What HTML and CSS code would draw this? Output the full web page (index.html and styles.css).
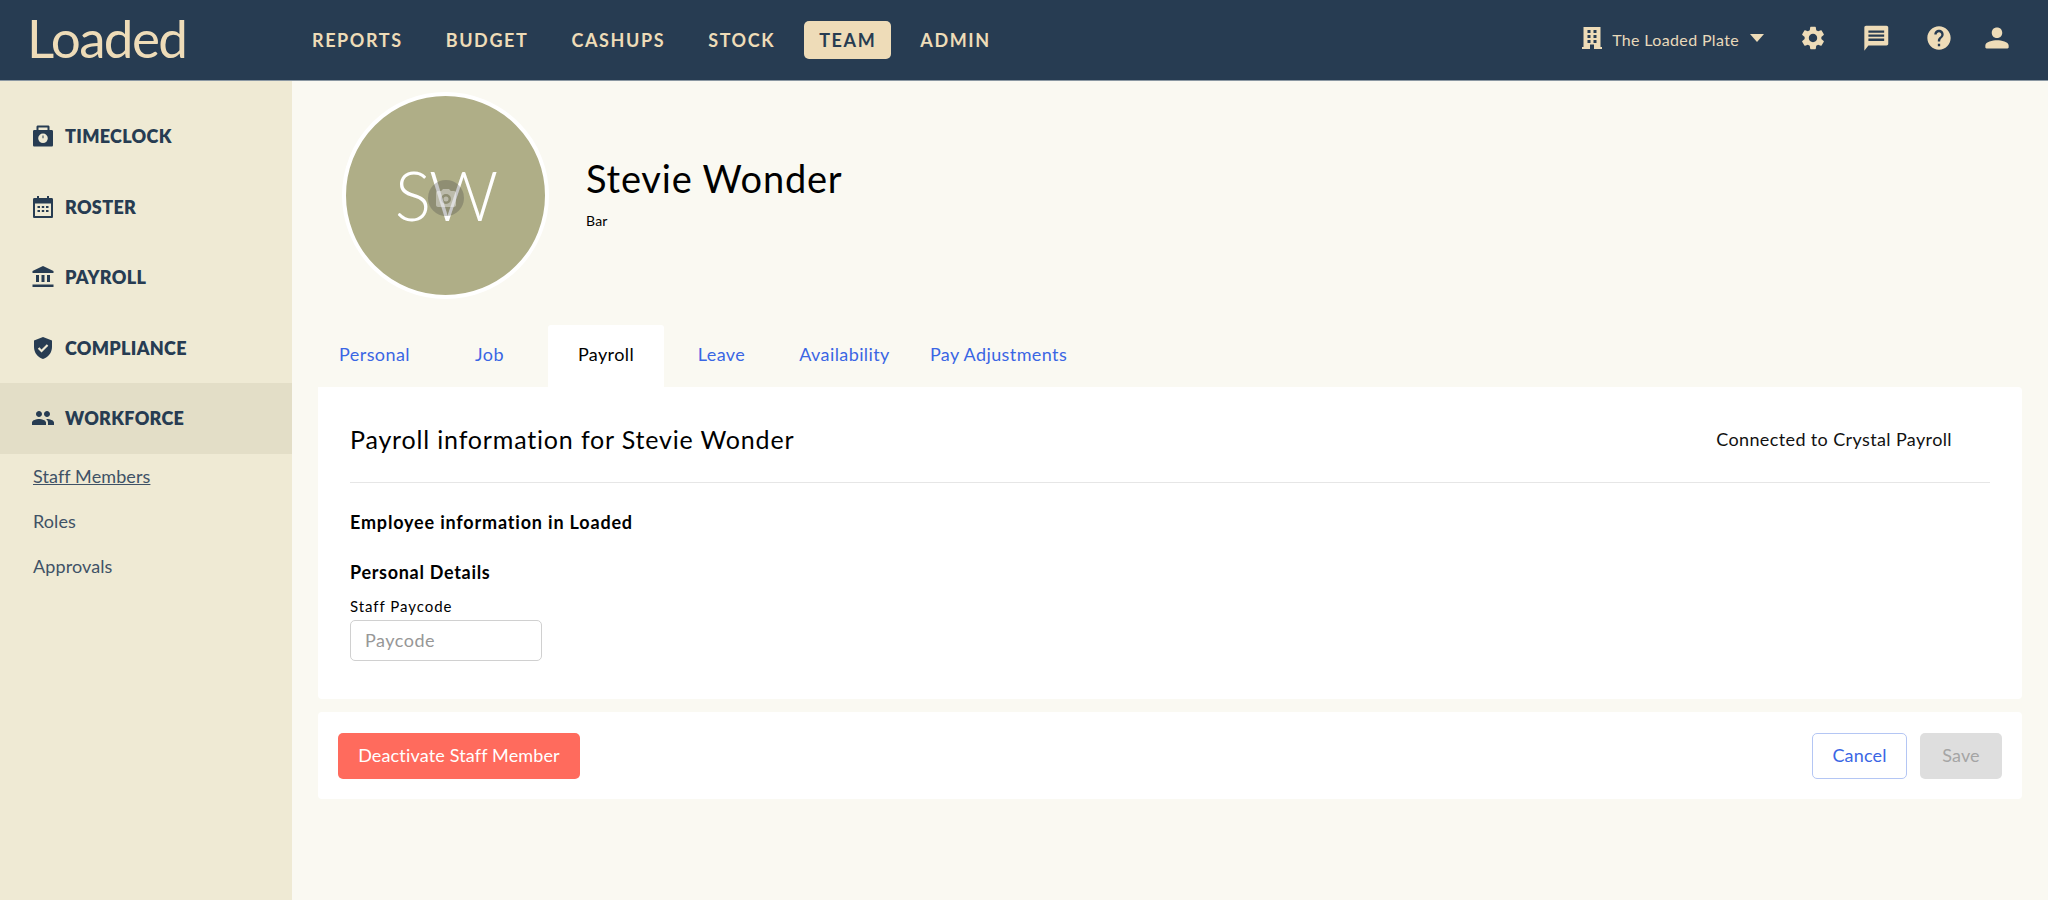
FILE: index.html
```html
<!DOCTYPE html>
<html lang="en">
<head>
<meta charset="utf-8">
<title>Loaded</title>
<link rel="stylesheet" href="styles.css">
</head>
<body>
<header class="topbar">
  <div class="logo">Loaded</div>
  <nav class="mainnav">
    <a class="navlink">REPORTS</a>
    <a class="navlink">BUDGET</a>
    <a class="navlink">CASHUPS</a>
    <a class="navlink">STOCK</a>
    <a class="navlink navlink-active">TEAM</a>
    <a class="navlink">ADMIN</a>
  </nav>
  <div class="topright">
    <div class="venue">
      <svg class="venue-icon" viewBox="0 0 20 22"><path fill-rule="evenodd" d="M1.500 0H18.500V20H20V22H0V20H1.500ZM5.500 3V6H8.500V3ZM11.500 3V6H14.500V3ZM5.500 8V11H8.500V8ZM11.500 8V11H14.500V8ZM5.500 13V16H8.500V13ZM11.500 13V16H14.500V13ZM8 17.500V22H12V17.500Z"/></svg>
      <span class="venue-name">The Loaded Plate</span>
      <span class="caret"></span>
    </div>
    <svg class="topicon" viewBox="0 0 24 24"><path d="M19.140 12.940c.04-.3.06-.61.06-.94 0-.32-.02-.64-.07-.94l2.030-1.580c.18-.14.23-.41.12-.61l-1.920-3.320c-.12-.22-.37-.29-.59-.22l-2.390.96c-.5-.38-1.030-.7-1.620-.94l-.36-2.540c-.04-.24-.24-.41-.48-.41h-3.840c-.24 0-.43.17-.47.41l-.36 2.540c-.59.24-1.130.57-1.620.94l-2.390-.96c-.22-.08-.47 0-.59.22L2.740 8.870c-.12.21-.08.47.12.61l2.030 1.580c-.05.3-.09.63-.09.94s.02.64.07.94l-2.030 1.580c-.18.14-.23.41-.12.61l1.920 3.320c.12.22.37.29.59.22l2.390-.96c.5.38 1.030.7 1.620.94l.36 2.540c.05.24.24.41.48.41h3.840c.24 0 .44-.17.47-.41l.36-2.540c.59-.24 1.130-.56 1.620-.94l2.390.96c.22.08.47 0 .59-.22l1.920-3.320c.12-.22.07-.47-.12-.61l-2.010-1.580zM12 15.600c-1.980 0-3.600-1.620-3.600-3.600s1.620-3.600 3.600-3.600 3.600 1.620 3.600 3.600-1.620 3.600-3.600 3.600z"/></svg>
    <svg class="topicon" viewBox="0 0 24 24"><path fill-rule="evenodd" d="M3.500 1.500H21c.9 0 1.500.6 1.500 1.500V17c0 .9-.6 1.500-1.500 1.500H5.500L2 23V3c0-.9.6-1.500 1.500-1.500ZM5.500 5.500V7.500H19V5.500ZM5.500 9V11H19V9ZM5.500 12.500V14.500H19V12.500Z"/></svg>
    <svg class="topicon" viewBox="0 0 24 24"><path d="M12 2C6.480 2 2 6.480 2 12s4.480 10 10 10 10-4.480 10-10S17.520 2 12 2zm1 17h-2v-2h2v2zm2.070-7.750l-.9.92C13.450 12.900 13 13.500 13 15h-2v-.5c0-1.100.45-2.100 1.170-2.830l1.240-1.260c.37-.36.59-.86.59-1.410 0-1.100-.9-2-2-2s-2 .9-2 2H8c0-2.210 1.790-4 4-4s4 1.790 4 4c0 .88-.36 1.680-.93 2.250z"/></svg>
    <svg class="topicon topicon-user" viewBox="0 0 24 24"><path d="M12 12c2.760 0 4.500-1.900 4.500-4.500S14.760 3 12 3 7.500 4.900 7.500 7.500 9.240 12 12 12zm0 2c-3.670 0-10 1.340-10 4.500V20c0 .6.400 1 1 1h18c.6 0 1-.4 1-1v-1.500c0-3.160-6.330-4.500-10-4.500z"/></svg>
  </div>
</header>

<div class="layout">
  <aside class="sidebar">
    <a class="sideitem">
      <svg class="sideicon" viewBox="0 0 24 24"><path fill-rule="evenodd" d="M7 1.500H17C18 1.500 18.500 2 18.500 3V6H20.500C21.500 6 22 6.500 22 7.500V21C22 22 21.500 22.500 20.500 22.500H3.500C2.500 22.500 2 22 2 21V7.500C2 6.500 2.500 6 3.500 6H5.500V3C5.500 2 6 1.500 7 1.500ZM7.500 3.500V6H16.500V3.500ZM12 9.500A4.800 4.800 0 1 0 12 19.100 4.800 4.800 0 1 0 12 9.500ZM11.500 11.500H12.500V14.300H11.500Z"/></svg>
      <span>TIMECLOCK</span>
    </a>
    <a class="sideitem">
      <svg class="sideicon" viewBox="0 0 24 24"><path fill-rule="evenodd" d="M6 1H8V3H16V1H18V3H20.500C21.500 3 22 3.500 22 4.500V21.500C22 22.500 21.500 23 20.500 23H3.500C2.500 23 2 22.500 2 21.500V4.500C2 3.500 2.500 3 3.500 3H6ZM4 8.500V21H20V8.500ZM6.500 11H9V13H6.500ZM10.800 11H13.200V13H10.800ZM15 11H17.500V13H15ZM6.500 15H9V17H6.500ZM10.800 15H13.200V17H10.800ZM15 15H17.500V17H15Z"/></svg>
      <span>ROSTER</span>
    </a>
    <a class="sideitem">
      <svg class="sideicon" viewBox="0 0 24 24"><path d="M5 10v7h3v-7H5zm5.500 0v7h3v-7h-3zM1.500 22h21v-2.500h-21V22zM16 10v7h3v-7h-3zM12 1 1.500 6v2h21V6L12 1z"/></svg>
      <span>PAYROLL</span>
    </a>
    <a class="sideitem">
      <svg class="sideicon" viewBox="0 0 24 24"><path fill-rule="evenodd" d="M12 1 3 4.500V11c0 5.550 3.840 10.740 9 12 5.160-1.260 9-6.450 9-12V4.500L12 1zM10.500 16.500 6.800 12.800 8.400 11.300 10.500 13.400 15.800 8.200 17.300 9.700Z"/></svg>
      <span>COMPLIANCE</span>
    </a>
    <a class="sideitem sideitem-active">
      <svg class="sideicon" viewBox="0 0 24 24"><path d="M16 11c1.660 0 2.990-1.340 2.990-3S17.660 5 16 5c-1.660 0-3 1.340-3 3s1.340 3 3 3zm-8 0c1.660 0 2.990-1.340 2.990-3S9.660 5 8 5C6.340 5 5 6.340 5 8s1.340 3 3 3zm0 2c-2.330 0-7 1.170-7 3.500V19h14v-2.500c0-2.330-4.670-3.500-7-3.500zm8 0c-.29 0-.62.02-.97.05 1.160.84 1.970 1.970 1.970 3.450V19h6v-2.500c0-2.330-4.670-3.500-7-3.500z"/></svg>
      <span>WORKFORCE</span>
    </a>
    <div class="submenu">
      <a class="subitem subitem-current">Staff Members</a>
      <a class="subitem">Roles</a>
      <a class="subitem">Approvals</a>
    </div>
  </aside>

  <main class="content">
    <section class="profile">
      <div class="avatar">
        <span class="initials">SW</span>
        <span class="camera">
          <svg viewBox="0 0 24 24"><path fill-rule="evenodd" d="M9 3 7.200 5H4C2.900 5 2 5.900 2 7V19C2 20.100 2.900 21 4 21H20C21.100 21 22 20.100 22 19V7C22 5.900 21.100 5 20 5H16.800L15 3ZM12 8A5 5 0 1 0 12 18 5 5 0 1 0 12 8ZM12 10.500A2.500 2.500 0 1 1 12 15.500 2.500 2.500 0 1 1 12 10.500Z"/></svg>
        </span>
      </div>
      <div class="identity">
        <h1 class="person-name">Stevie Wonder</h1>
        <div class="person-role">Bar</div>
      </div>
    </section>

    <nav class="tabs">
      <a class="tab tab-personal">Personal</a>
      <a class="tab tab-job">Job</a>
      <a class="tab tab-active">Payroll</a>
      <a class="tab tab-leave">Leave</a>
      <a class="tab tab-avail">Availability</a>
      <a class="tab tab-adjust">Pay Adjustments</a>
    </nav>

    <section class="card card-main">
      <div class="card-head">
        <h2 class="card-title">Payroll information for Stevie Wonder</h2>
        <div class="connected">Connected to Crystal Payroll</div>
      </div>
      <h3 class="section-title">Employee information in Loaded</h3>
      <h3 class="section-sub">Personal Details</h3>
      <label class="field-label" for="paycode">Staff Paycode</label>
      <input class="field-input" id="paycode" type="text" placeholder="Paycode">
    </section>

    <section class="card card-actions">
      <button class="btn btn-danger" type="button">Deactivate Staff Member</button>
      <div class="actions-right">
        <button class="btn btn-outline" type="button">Cancel</button>
        <button class="btn btn-disabled" type="button">Save</button>
      </div>
    </section>
  </main>
</div>
</body>
</html>
```

FILE: styles.css
```css
* { box-sizing: border-box; }
html, body { margin: 0; padding: 0; height: 100%; overflow: hidden; }
body {
  background: #faf9f2;
  font-family: "Lato", "Noto Sans", sans-serif;
  color: #000;
  width: 2048px;
  height: 900px;
}
h1, h2, h3 { margin: 0; font-weight: normal; }

.topbar {
  height: 81px;
  background: #273c52;
  border-bottom: 1px solid #8b98a3;
  display: flex;
  align-items: flex-start;
  color: #eedcb8;
}
.logo {
  width: 298px;
  padding: 9px 0 0 27px;
  font-size: 53px;
  line-height: 58px;
  font-weight: 400;
  letter-spacing: -1.600px;
  color: #eedcb8;
}
.mainnav {
  display: flex;
  align-items: center;
  height: 38px;
  margin-top: 21px;
  gap: 15px;
}
.navlink {
  padding: 0 14px;
  height: 38px;
  line-height: 38px;
  font-size: 18px;
  font-weight: 700;
  letter-spacing: 1.600px;
  color: #eedcb8;
  border-radius: 5px;
}
.navlink-active { background: #eedcb8; color: #273c52; padding: 0 15px; }
.topright {
  margin-left: auto;
  display: flex;
  align-items: center;
  height: 38px;
  margin-top: 20px;
  padding-right: 37px;
  gap: 35px;
}
.venue { display: flex; align-items: center; }
.venue-icon { width: 20px; height: 22px; fill: #eedcb8; margin-right: 10px; margin-top: -2px; }
.venue-name { font-size: 16px; letter-spacing: .35px; color: #e8d9bb; font-weight: 400; }
.caret {
  margin-left: 11px;
  margin-top: -3px;
  border-left: 7px solid transparent;
  border-right: 7px solid transparent;
  border-top: 8px solid #eedcb8;
}
.topicon { width: 28px; height: 28px; fill: #eedcb8; margin-top: -2px; }
.topicon-user { margin-left: -5px; }

.layout { display: flex; height: 819px; }

.sidebar { width: 292px; flex: none; background: #efead4; padding-top: 20px; }
.sideitem {
  height: 70.500px;
  display: flex;
  align-items: center;
  padding-left: 31px;
  color: #273c52;
  font-weight: 800;
  font-size: 18px;
  letter-spacing: .3px;
}
.sideitem-active { background: #e3dec7; }
.sideicon { width: 24px; height: 24px; fill: #273c52; margin-right: 10px; flex: none; }
.subitem {
  display: block;
  height: 45px;
  line-height: 44px;
  padding-left: 33px;
  color: #3f5266;
  font-size: 18px;
  letter-spacing: .1px;
  font-weight: 400;
}
.subitem-current { text-decoration: underline; }

.content { flex: 1; padding: 0 26px; min-width: 0; }

.profile { display: flex; height: 244px; padding-left: 24px; padding-top: 11px; }
.avatar {
  width: 207px;
  height: 207px;
  border-radius: 50%;
  background: #afae87;
  border: 4px solid #fff;
  position: relative;
  display: flex;
  align-items: center;
  justify-content: center;
  flex: none;
}
.initials { color: #fff; font-size: 68px; font-weight: 300; letter-spacing: -2px; margin-top: -3px; }
.camera {
  position: absolute;
  left: 82px;
  top: 84px;
  width: 36px;
  height: 36px;
  border-radius: 50%;
  background: rgba(70, 70, 70, .3);
  display: flex;
  align-items: center;
  justify-content: center;
}
.camera svg { width: 24px; height: 24px; fill: rgba(255, 255, 255, .4); }
.identity { padding: 63px 0 0 37px; }
.person-name { font-size: 38px; line-height: 46px; letter-spacing: .8px; font-weight: 400; }
.person-role { font-size: 14px; line-height: 18px; margin-top: 11px; letter-spacing: .2px; }

.tabs { display: flex; height: 62px; }
.tab {
  height: 62px;
  line-height: 59px;
  font-size: 18px;
  color: #3a66e4;
  letter-spacing: .4px;
  text-align: center;
  flex: none;
}
.tab-personal { width: 113px; }
.tab-job { width: 117px; }
.tab-active { width: 116px; background: #fff; color: #000; border-radius: 3px 3px 0 0; }
.tab-leave { width: 115px; }
.tab-avail { width: 123px; margin-left: 4px; }
.tab-adjust { width: 159px; margin-left: 13px; }

.card { background: #fff; border-radius: 4px; }
.card-main { height: 312px; padding: 0 32px; border-top-left-radius: 0; }
.card-head {
  height: 96px;
  border-bottom: 1px solid #e6e6e6;
  display: flex;
  align-items: center;
  justify-content: space-between;
  padding-top: 9px;
  padding-right: 38px;
}
.card-title { font-size: 25px; letter-spacing: .83px; }
.connected { font-size: 18px; letter-spacing: .38px; color: #111; }
.section-title { font-size: 18px; font-weight: 700; line-height: 24px; margin-top: 27px; letter-spacing: .82px; }
.section-sub { font-size: 18px; font-weight: 700; line-height: 24px; margin-top: 26px; letter-spacing: .7px; }
.field-label { display: block; font-size: 15px; line-height: 20px; margin-top: 12px; letter-spacing: .95px; }
.field-input {
  display: block;
  width: 192px;
  height: 41px;
  margin-top: 4px;
  padding: 0 14px 2px;
  border: 1px solid #d0d0d0;
  border-radius: 5px;
  background: #fff;
  font-family: inherit;
  font-size: 18px;
  letter-spacing: .5px;
}
.field-input::placeholder { color: #979797; opacity: 1; }

.card-actions {
  height: 87px;
  margin-top: 13px;
  padding: 21px 20px 0;
  display: flex;
  justify-content: space-between;
  align-items: flex-start;
}
.actions-right { display: flex; gap: 13px; }
.btn {
  height: 46px;
  border-radius: 5px;
  font-family: inherit;
  font-size: 18px;
  letter-spacing: .15px;
  border: 1px solid transparent;
  padding: 0 0 2px;
}
.btn-danger { width: 242px; background: #ff6b5d; color: #fff; }
.btn-outline { width: 95px; background: #fff; color: #3a66e4; border-color: #b4c6f4; }
.btn-disabled { width: 82px; background: #dedede; color: #a5a5a5; }
```
